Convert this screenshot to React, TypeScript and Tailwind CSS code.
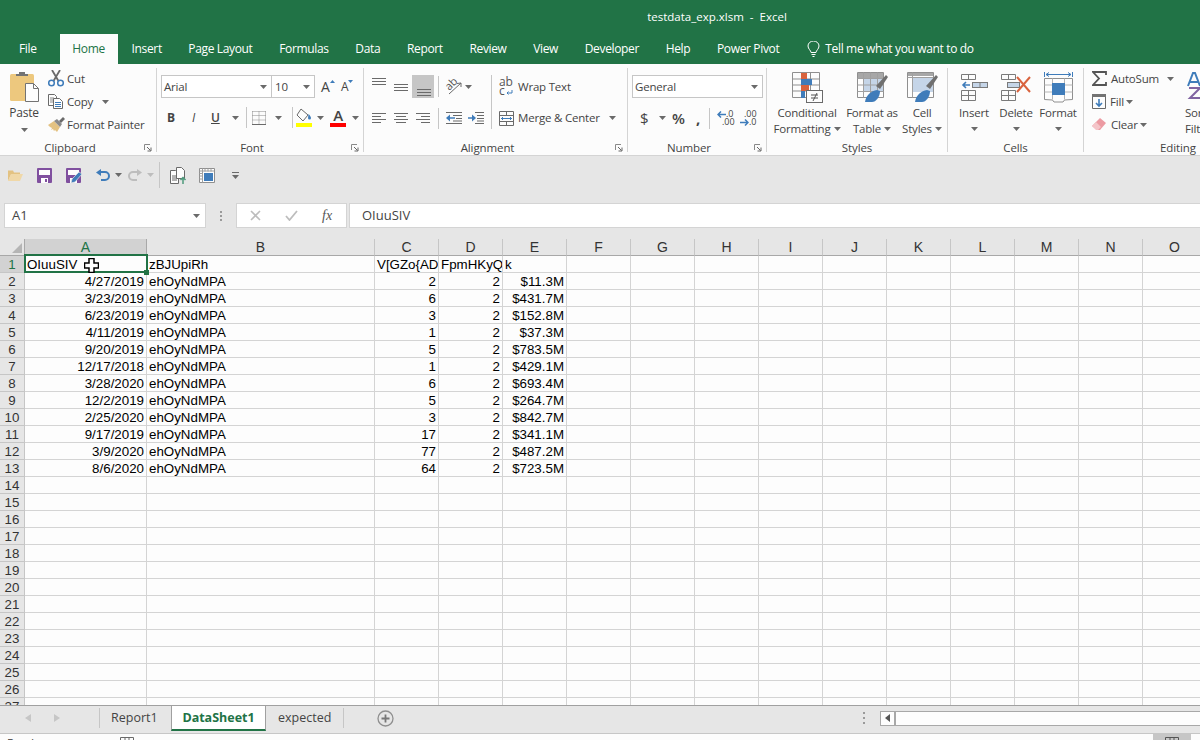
import React from 'react'

const ui = "font-['Open_Sans',sans-serif]"
const cell = "font-['Liberation_Sans',Arial,sans-serif]"

const tabs = [
    { name: 'Insert', left: 14 },
    { name: 'Page Layout', left: 26.5 },
    { name: 'Formulas', left: 26.7 },
    { name: 'Data', left: 26.7 },
    { name: 'Report', left: 26.7 },
    { name: 'Review', left: 26.7 },
    { name: 'View', left: 26.7 },
    { name: 'Developer', left: 26.7 },
    { name: 'Help', left: 26.7 },
    { name: 'Power Pivot', left: 26.7 },
]

const columns = [
    { name: 'A', w: 'w-[122px]' },
    { name: 'B', w: 'w-[228px]' },
    { name: 'C', w: 'w-[64px]' },
    { name: 'D', w: 'w-[64px]' },
    { name: 'E', w: 'w-[64px]' },
    { name: 'F', w: 'w-[64px]' },
    { name: 'G', w: 'w-[64px]' },
    { name: 'H', w: 'w-[64px]' },
    { name: 'I', w: 'w-[64px]' },
    { name: 'J', w: 'w-[64px]' },
    { name: 'K', w: 'w-[64px]' },
    { name: 'L', w: 'w-[64px]' },
    { name: 'M', w: 'w-[64px]' },
    { name: 'N', w: 'w-[64px]' },
    { name: 'O', w: 'w-[64px]' },
]

const data = [
    ['4/27/2019', '2', '$11.3M'],
    ['3/23/2019', '6', '$431.7M'],
    ['6/23/2019', '3', '$152.8M'],
    ['4/11/2019', '1', '$37.3M'],
    ['9/20/2019', '5', '$783.5M'],
    ['12/17/2018', '1', '$429.1M'],
    ['3/28/2020', '6', '$693.4M'],
    ['12/2/2019', '5', '$264.7M'],
    ['2/25/2020', '3', '$842.7M'],
    ['9/17/2019', '17', '$341.1M'],
    ['3/9/2020', '77', '$487.2M'],
    ['8/6/2020', '64', '$723.5M'],
]

function Caret({ className = '', color = '#6a6a6a' }: { className?: string; color?: string }) {
    return (
        <svg width="7" height="4" viewBox="0 0 7 4" className={'shrink-0 ' + className}>
            <path d="M0 0h7L3.5 4z" fill={color} />
        </svg>
    )
}

function Launcher() {
    return (
        <svg width="8" height="8" viewBox="0 0 8 8" className="absolute right-[4px] bottom-[3px]">
            <path d="M.5 6V.5H6" fill="none" stroke="#8a8a8a" />
            <path d="M3 3l3.5 3.5M7 3.5V7H3.5" fill="none" stroke="#666" />
        </svg>
    )
}

function Group({ label, w, children, launcher, last }: { label: string; w: string; children: React.ReactNode; launcher?: boolean; last?: boolean }) {
    return (
        <div className={'flex h-[91px] shrink-0 ' + w}>
            <div className="relative flex h-[91px] min-w-0 flex-1 flex-col">
                <div className="min-h-0 flex-1">{children}</div>
                <div className={'h-[16px] text-center text-[11.5px] leading-[17px] tracking-[-0.1px] text-[#444] ' + (launcher ? 'pr-[16px]' : '')}>{label}</div>
                {launcher && <Launcher />}
            </div>
            {!last && <div className="mt-[4px] h-[84px] w-px shrink-0 bg-[#d4d4d4]" />}
        </div>
    )
}

function Lines({ rows }: { rows: number[][] }) {
    return (
        <>
            {rows.map((r, i) => (
                <path key={i} d={`M${r[0]} ${r[2] + 0.5}H${r[1]}`} stroke="#6a6a6a" />
            ))}
        </>
    )
}

function AlignIcon({ rows }: { rows: number[][] }) {
    return (
        <svg width="15" height="12" viewBox="0 0 15 12">
            <Lines rows={rows} />
        </svg>
    )
}

function Sep({ h = 'h-[21px]', className = '' }: { h?: string; className?: string }) {
    return <div className={'w-px shrink-0 bg-[#c6c6c6] ' + h + ' ' + className} />
}

function BigButton({ icon, lines, w, caretOwnLine }: { icon: React.ReactNode; lines: string[]; w: string; caretOwnLine?: boolean }) {
    return (
        <div className={'flex shrink-0 flex-col items-center pt-[8px] text-[#444] leading-[16px] ' + w}>
            <div className="mb-[2px] flex h-[31px] items-center">{icon}</div>
            <div className="whitespace-nowrap">{lines[0]}</div>
            {caretOwnLine ? (
                <Caret className="mt-[6px]" />
            ) : (
                <div className="flex items-center gap-[3px] whitespace-nowrap">
                    {lines[1]}
                    <Caret />
                </div>
            )}
        </div>
    )
}

function PasteIcon() {
    return (
        <svg width="30" height="31" viewBox="0 0 30 31">
            <rect x="1" y="3" width="24" height="27" rx="1.5" fill="#edc87e" />
            <path d="M7 5V3h3V1h6v2h3v2z" fill="#737373" />
            <path d="M16.5 12.5h8l5 5v13h-13z" fill="#fdfdfd" stroke="#737373" />
            <path d="M24.5 12.5v5h5" fill="none" stroke="#737373" />
        </svg>
    )
}

function CutIcon() {
    return (
        <svg width="16" height="17" viewBox="0 0 16 17">
            <path d="M4 0l6.500 11M12 0L5.500 11" stroke="#6a6a6a" strokeWidth="1.800" fill="none" />
            <circle cx="3.500" cy="13" r="2.800" fill="none" stroke="#3f7cba" strokeWidth="1.500" />
            <circle cx="12.500" cy="13" r="2.800" fill="none" stroke="#3f7cba" strokeWidth="1.500" />
        </svg>
    )
}

function CopyIcon() {
    return (
        <svg width="16" height="15" viewBox="0 0 16 15">
            <path d="M.5.5h6l2 2v9H.5z" fill="#fdfdfd" stroke="#6a6a6a" />
            <path d="M2 4h4M2 6h3M2 8h3" stroke="#8a8a8a" />
            <path d="M5.500 4.500h6l3 3v7h-9z" fill="#fdfdfd" stroke="#6a6a6a" />
            <path d="M7 8.500h6M7 10.500h6M7 12.500h6" stroke="#3f7cba" />
        </svg>
    )
}

function PainterIcon() {
    return (
        <svg width="17" height="15" viewBox="0 0 17 15">
            <path d="M0 8l6-4 6 6-3 5-2-2-1 1-1-2-2 1 1-2-2-1z" fill="#e3c282" />
            <path d="M6 4l3-2 5 5-2 3z" fill="#8a8a8a" />
            <path d="M11 4l4-4 2 2-4 4z" fill="#6a6a6a" />
        </svg>
    )
}

function FillIcon() {
    return (
        <svg width="16" height="19" viewBox="0 0 16 19">
            <path d="M5 1l7 6-5 6-6-6z" fill="#fdfdfd" stroke="#6a6a6a" />
            <path d="M12.500 6c1.500 1.500 2.500 3 2.500 4a1.500 1.500 0 0 1-3 0z" fill="#3f7cba" />
            <rect x="0" y="15" width="16" height="4" fill="#ffff00" />
        </svg>
    )
}

function BordersIcon() {
    return (
        <svg width="14" height="14" viewBox="0 0 14 14">
            <path d="M.5 .5h13M.5 4.500h13M.5 9h13M.5 .5v13M7 .5v13M13.500 .5v13" stroke="#8a8a8a" strokeDasharray="1 1" fill="none" />
            <path d="M0 13.500h14" stroke="#6a6a6a" />
        </svg>
    )
}

function OrientIcon() {
    return (
        <svg width="18" height="17" viewBox="0 0 18 17" className="overflow-visible">
            <text x="1" y="11" fontSize="11" fill="#555" fontFamily="Open Sans, sans-serif" transform="rotate(-45 5 8)">ab</text>
            <path d="M4 16L16 5M16 5l-4 .5M16 5v4" stroke="#6a6a6a" fill="none" />
        </svg>
    )
}

function WrapIcon() {
    return (
        <svg width="15" height="18" viewBox="0 0 15 18" className="overflow-visible">
            <text x="0" y="8" fontSize="12" fill="#555" fontFamily="Open Sans, sans-serif">ab</text>
            <text x="0" y="17" fontSize="12" fill="#555" fontFamily="Open Sans, sans-serif">c</text>
            <path d="M13 12v3H8M9.500 13.500L8 15l1.500 1.500" stroke="#3f7cba" fill="none" />
        </svg>
    )
}

function MergeIcon() {
    return (
        <svg width="15" height="15" viewBox="0 0 15 15">
            <path d="M.5.5h14v14H.5zM.5 4.500h14M.5 10.500h14M7.500.5v4M7.500 10.500v4" stroke="#6a6a6a" fill="none" />
            <path d="M2 7.500h11M4 6L2.500 7.500 4 9M11 6l1.500 1.500L11 9" stroke="#3f7cba" fill="none" />
        </svg>
    )
}

function IndentIcon({ right }: { right?: boolean }) {
    return (
        <svg width="16" height="12" viewBox="0 0 16 12">
            {right ? (
                <>
                    <path d="M0 6h5" stroke="#3f7cba" strokeWidth="1.500" />
                    <path d="M4 2.500L8 6l-4 3.500z" fill="#3f7cba" />
                    <path d="M7 .5h9M9 3.500h7M9 6.500h7M9 9h7M7 11.500h9" stroke="#6a6a6a" />
                </>
            ) : (
                <>
                    <path d="M3 6h6" stroke="#3f7cba" strokeWidth="1.500" />
                    <path d="M4 2.500L0 6l4 3.500z" fill="#3f7cba" />
                    <path d="M0 .5h16M7 3.500h9M10 6.500h6M7 9h9M0 11.500h16" stroke="#6a6a6a" />
                </>
            )}
        </svg>
    )
}

function CondIcon() {
    return (
        <svg width="31" height="31" viewBox="0 0 31 31">
            <path d="M.5.5h27v25H.5zM.5 7h27M.5 13h27M.5 19h27M9.500.5v25M18.500.5v25" stroke="#8f8f8f" fill="none" />
            <path d="M9 1h6v6H9z" fill="#d9633e" />
            <path d="M9 7h11v6H9z" fill="#3f7cba" />
            <path d="M9 13h8v6H9z" fill="#d9633e" />
            <path d="M9 19h4v7H9z" fill="#3f7cba" />
            <rect x="14.500" y="18.500" width="16" height="12" fill="#fdfdfd" stroke="#6a6a6a" />
            <path d="M19 23h7M19 26h7M25 21l-4 8" stroke="#555" />
        </svg>
    )
}

function TableStyleIcon() {
    return (
        <svg width="31" height="31" viewBox="0 0 31 31">
            <path d="M.5.5h26v25H.5z" fill="#fdfdfd" stroke="#8f8f8f" />
            <rect x="1" y="1" width="25" height="5" fill="#a7a7a7" />
            <rect x="6" y="6" width="20" height="14" fill="#c5d5e8" />
            <path d="M.5 6.500h26M.5 13h26M.5 19.500h26M6.500.5v25M13.500.5v25M20.500.5v25" stroke="#a0a0a0" fill="none" />
            <path d="M19 14L29 3l2 2-8 12z" fill="#6f6f6f" />
            <path d="M8 30c1-7 6-11 12-12l3 1c0 6-4 11-8 11z" fill="#3f7cba" />
        </svg>
    )
}

function CellStyleIcon() {
    return (
        <svg width="31" height="31" viewBox="0 0 31 31">
            <path d="M.5.5h26v25H.5z" fill="#fdfdfd" stroke="#8f8f8f" />
            <rect x="1" y="1" width="25" height="3" fill="#a7a7a7" />
            <path d="M.5 5.500h26M5.500.5v25" stroke="#a0a0a0" fill="none" />
            <rect x="6" y="6" width="20" height="14" fill="#c5d5e8" />
            <path d="M19 14L29 3l2 2-8 12z" fill="#6f6f6f" />
            <path d="M8 30c1-7 6-11 12-12l3 1c0 6-4 11-8 11z" fill="#3f7cba" />
        </svg>
    )
}

function InsertIcon() {
    return (
        <svg width="27" height="28" viewBox="0 0 27 28">
            <path d="M.5.5h14v5H.5zM7.500.5v5M.5 16.500h14v10H.5zM.5 21.500h14M7.500 16.500v10" stroke="#7a7a7a" fill="none" />
            <rect x="11.500" y="8.500" width="15" height="5" fill="#c5d5e8" stroke="#7a7a7a" />
            <path d="M19 8.500v5" stroke="#7a7a7a" />
            <path d="M2 11h7M5 8l-3 3 3 3" stroke="#3f7cba" strokeWidth="1.600" fill="none" />
        </svg>
    )
}

function DeleteIcon() {
    return (
        <svg width="31" height="28" viewBox="0 0 31 28">
            <path d="M.5.5h14v5H.5zM7.500.5v5M.5 16.500h14v10H.5zM.5 21.500h14M7.500 16.500v10" stroke="#7a7a7a" fill="none" />
            <rect x="6.500" y="8.500" width="12" height="5" fill="#c5d5e8" stroke="#7a7a7a" />
            <path d="M16 3l13 15M29 3L16 18" stroke="#d9633e" strokeWidth="2" fill="none" />
        </svg>
    )
}

function FormatIcon() {
    return (
        <svg width="29" height="31" viewBox="0 0 29 31">
            <path d="M.5 0v5M28.500 0v5" stroke="#3f7cba" />
            <path d="M2 2.500h25M5 .5L2 2.500l3 2M24 .5l3 2-3 2" stroke="#3f7cba" fill="none" />
            <path d="M.5 6.500h28v21l-8 .5-1.500 2H10l-1.500-2-8-.5z" fill="#fdfdfd" stroke="#8f8f8f" />
            <path d="M.5 13h28M.5 20h28M8.500 6.500v21M20.500 6.500v21" stroke="#b5b5b5" fill="none" />
            <rect x="8" y="11" width="13" height="12" fill="#3f7cba" />
        </svg>
    )
}

function SumIcon() {
    return (
        <svg width="15" height="15" viewBox="0 0 15 15">
            <path d="M14 4V1H1l6 6.500L1 14h13v-3" stroke="#555" strokeWidth="1.800" fill="none" />
        </svg>
    )
}

function FillDownIcon() {
    return (
        <svg width="14" height="15" viewBox="0 0 14 15">
            <path d="M.5.5h13v14H.5z" fill="#fdfdfd" stroke="#6a6a6a" />
            <rect x="0" y="0" width="14" height="3" fill="#737373" />
            <path d="M7 5v7M4 9l3 3 3-3" stroke="#3f7cba" strokeWidth="1.600" fill="none" />
        </svg>
    )
}

function EraserIcon() {
    return (
        <svg width="14" height="13" viewBox="0 0 14 13">
            <path d="M8 0l6 5-6 7H5L0 8z" fill="#ec9aa2" />
            <path d="M0 8l4-4 5 5-3 3H4z" fill="#f4c4c8" />
        </svg>
    )
}

function SortIcon() {
    return (
        <svg width="15" height="28" viewBox="0 0 15 28">
            <path d="M1 14L6 1h2l5 13M3 10h8" stroke="#3f7cba" strokeWidth="2" fill="none" />
            <path d="M2 16h11L3 26h10" stroke="#8064a2" strokeWidth="2" fill="none" />
        </svg>
    )
}

function DecimalArrow({ right }: { right?: boolean }) {
    return (
        <svg width="9" height="7" viewBox="0 0 9 7" className="shrink-0">
            <path d={right ? 'M0 3.500h8M5 .5l3 3-3 3' : 'M9 3.500H1M4 .5l-3 3 3 3'} stroke="#3f7cba" strokeWidth="1.500" fill="none" />
        </svg>
    )
}

function Ribbon() {
    return (
        <div className={'flex h-[92px] shrink-0 items-start overflow-hidden border-b border-[#d4d4d4] bg-[#fcfcfc] text-[11.5px] tracking-[-0.2px] ' + ui}>
            <Group label="Clipboard" w="w-[157px]" launcher>
                <div className="flex">
                    <div className="ml-[4px] w-[40px]">
                        <div className="flex flex-col items-center pt-[7px] text-[12px] leading-[16px] text-[#444]">
                            <div className="mb-[3px]"><PasteIcon /></div>
                            <div>Paste</div>
                            <Caret className="mt-[7px]" />
                        </div>
                    </div>
                    <div className="ml-[4px] flex flex-col pt-[3px] leading-[16px] text-[#444]">
                        <div className="flex h-[23px] items-center"><span className="w-[19px]"><CutIcon /></span>Cut</div>
                        <div className="flex h-[23px] items-center"><span className="w-[19px]"><CopyIcon /></span>Copy<Caret className="ml-[9px]" /></div>
                        <div className="flex h-[23px] items-center whitespace-nowrap"><span className="w-[19px]"><PainterIcon /></span>Format Painter</div>
                    </div>
                </div>
            </Group>
            <Group label="Font" w="w-[207px]" launcher>
                <div className="flex flex-col pl-[4px] pt-[11px] text-[#444]">
                    <div className="flex items-center">
                        <div className="flex h-[23px] w-[111px] items-center justify-between border border-[#c6c6c6] bg-white pl-[2px] pr-[4px]">Arial<Caret /></div>
                        <div className="flex h-[23px] w-[43px] items-center justify-between border border-l-0 border-[#c6c6c6] bg-white pl-[3px] pr-[4px]">10<Caret /></div>
                        <div className="ml-[6px] flex w-[20px] items-start text-[14px] leading-[16px]">A<svg width="5" height="3" viewBox="0 0 5 3" className="mt-[1px]"><path d="M0 3L2.500 0 5 3z" fill="#3f7cba" /></svg></div>
                        <div className="flex items-start text-[12px] leading-[16px]">A<svg width="5" height="3" viewBox="0 0 5 3" className="mt-[1px]"><path d="M0 0l2.500 3L5 0z" fill="#3f7cba" /></svg></div>
                    </div>
                    <div className="mt-[9px] flex items-center">
                        <span className="ml-[6px] w-[25px] text-[12px] font-bold leading-[20px]">B</span>
                        <span className="w-[19px] text-[12px] italic leading-[20px]">I</span>
                        <span className="w-[21px] text-[12px] font-semibold underline leading-[20px]">U</span>
                        <Caret />
                        <Sep className="ml-[7px]" />
                        <span className="ml-[5px]"><BordersIcon /></span>
                        <Caret className="ml-[9px]" />
                        <Sep className="ml-[10px]" />
                        <span className="ml-[3px]"><FillIcon /></span>
                        <Caret className="ml-[5px]" />
                        <div className="ml-[6px] flex w-[16px] flex-col items-center text-[15px] font-semibold leading-[15px]">A<div className="h-[4px] w-[16px] bg-[#ff0000]" /></div>
                        <Caret className="ml-[6px]" />
                    </div>
                </div>
            </Group>
            <Group label="Alignment" w="w-[264px]" launcher>
                <div className="flex pl-[8px] pt-[11px] text-[#444]">
                    <div className="flex flex-col">
                        <div className="flex h-[23px] items-center">
                            <span className="w-[22px] pb-[6px]"><AlignIcon rows={[[0, 14, 0], [0, 14, 3], [0, 14, 6]]} /></span>
                            <span className="w-[18px]"><AlignIcon rows={[[0, 14, 3], [0, 14, 6], [0, 14, 9]]} /></span>
                            <span className="flex h-[23px] w-[22px] items-end justify-center bg-[#c6c6c6] pb-[1px]"><AlignIcon rows={[[1, 15, 4], [1, 15, 7], [1, 15, 10]]} /></span>
                        </div>
                        <div className="mt-[10px] flex h-[20px] items-center">
                            <span className="w-[22px]"><AlignIcon rows={[[0, 14, 1], [0, 9, 4], [0, 14, 7], [0, 9, 10]]} /></span>
                            <span className="w-[22px]"><AlignIcon rows={[[0, 14, 1], [2, 12, 4], [0, 14, 7], [2, 12, 10]]} /></span>
                            <span className="w-[18px]"><AlignIcon rows={[[0, 14, 1], [5, 14, 4], [0, 14, 7], [5, 14, 10]]} /></span>
                        </div>
                    </div>
                    <div className="ml-[4px] flex flex-col">
                        <div className="flex h-[23px] items-center">
                            <Sep />
                            <span className="ml-[6px]"><OrientIcon /></span>
                            <Caret className="ml-[2px]" />
                        </div>
                        <div className="mt-[10px] flex h-[20px] items-center">
                            <Sep />
                            <span className="ml-[7px]"><IndentIcon /></span>
                            <span className="ml-[6px]"><IndentIcon right /></span>
                        </div>
                    </div>
                    <Sep h="h-[54px]" className="ml-[7px]" />
                    <div className="ml-[7px] flex flex-col">
                        <div className="flex h-[23px] items-center gap-[4px]"><WrapIcon />Wrap Text</div>
                        <div className="mt-[10px] flex h-[20px] items-center"><MergeIcon /><span className="ml-[4px] whitespace-nowrap">Merge &amp; Center</span><Caret className="ml-[9px]" /></div>
                    </div>
                </div>
            </Group>
            <Group label="Number" w="w-[139px]" launcher>
                <div className="flex flex-col pl-[4px] pt-[11px] text-[#444]">
                    <div className="flex h-[23px] w-[131px] items-center justify-between border border-[#c6c6c6] bg-white pl-[2px] pr-[4px]">General<Caret /></div>
                    <div className="mt-[10px] flex h-[20px] items-center">
                        <span className="ml-[8px] w-[19px] text-[15px]">$</span>
                        <Caret />
                        <span className="ml-[6px] w-[24px] text-[15px] font-semibold">%</span>
                        <span className="w-[13px] text-[15px] font-bold leading-[15px]">,</span>
                        <Sep className="mr-[7px]" />
                        <div className="flex w-[23px] flex-col items-start text-[9px] leading-[8px] tracking-normal">
                            <span className="flex items-center">
                                <DecimalArrow />.0
                            </span>
                            <span className="pl-[5px]">.00</span>
                        </div>
                        <div className="flex w-[18px] flex-col items-start text-[9px] leading-[8px] tracking-normal">
                            <span className="pl-[4px]">.00</span>
                            <span className="flex items-center">
                                <DecimalArrow right />.0
                            </span>
                        </div>
                    </div>
                </div>
            </Group>
            <Group label="Styles" w="w-[181px]">
                <div className="flex">
                    <BigButton w="w-[80px]" icon={<CondIcon />} lines={['Conditional', 'Formatting']} />
                    <BigButton w="w-[50px]" icon={<TableStyleIcon />} lines={['Format as', 'Table']} />
                    <BigButton w="w-[50px]" icon={<CellStyleIcon />} lines={['Cell', 'Styles']} />
                </div>
            </Group>
            <Group label="Cells" w="w-[136px]">
                <div className="flex pl-[5px]">
                    <BigButton w="w-[42px]" icon={<InsertIcon />} lines={['Insert']} caretOwnLine />
                    <BigButton w="w-[42px]" icon={<DeleteIcon />} lines={['Delete']} caretOwnLine />
                    <BigButton w="w-[42px]" icon={<FormatIcon />} lines={['Format']} caretOwnLine />
                </div>
            </Group>
            <Group label="Editing" w="w-[188px]" last>
                <div className="flex leading-[16px] text-[#444]">
                    <div className="flex w-[101px] flex-col pl-[8px] pt-[3px]">
                        <div className="flex h-[23px] items-center"><SumIcon /><span className="ml-[4px]">AutoSum</span><Caret className="ml-[8px]" /></div>
                        <div className="flex h-[23px] items-center"><FillDownIcon /><span className="ml-[4px]">Fill</span><Caret className="ml-[2px]" /></div>
                        <div className="flex h-[23px] items-center"><EraserIcon /><span className="ml-[5px]">Clear</span><Caret className="ml-[2px]" /></div>
                    </div>
                    <div className="flex flex-col pt-[8px]">
                        <div className="mb-[2px] h-[31px] pl-[2px]"><SortIcon /></div>
                        <div>Sort &amp;</div>
                        <div>Filter</div>
                    </div>
                </div>
            </Group>
        </div>
    )
}

function SaveIcon() {
    return (
        <svg width="15" height="15" viewBox="0 0 15 15">
            <rect width="15" height="15" rx="1" fill="#80509f" />
            <rect x="2" y="2" width="11" height="5" fill="#fdfdfd" />
            <rect x="4" y="10" width="7" height="5" fill="#fdfdfd" />
            <rect x="8" y="11" width="2" height="3" fill="#80509f" />
        </svg>
    )
}

function QuickAccess() {
    return (
        <div className="h-[47px] shrink-0 pt-[6px]">
            <div className="flex h-[26px] items-center pl-[7px]">
                <svg width="16" height="13" viewBox="0 0 16 13">
                    <path d="M1 12V1.500h5l1 2h6v2H4L1 12z" fill="#e3c282" />
                    <path d="M1 12l3-7h12l-3 7z" fill="#f0d8a8" />
                </svg>
                <span className="ml-[14px]"><SaveIcon /></span>
                <svg width="17" height="15" viewBox="0 0 17 15" className="ml-[14px]">
                    <rect width="15" height="15" rx="1" fill="#80509f" />
                    <rect x="2" y="2" width="11" height="5" fill="#fdfdfd" />
                    <rect x="4" y="10" width="7" height="5" fill="#fdfdfd" />
                    <path d="M5 15l1-4 7-7 3 2-7 8z" fill="#3f7cba" stroke="#e6e6e6" strokeWidth=".7" />
                </svg>
                <svg width="14" height="13" viewBox="0 0 14 13" className="ml-[13px]">
                    <path d="M3 3h6a4 4 0 0 1 0 8H5" stroke="#3f7cba" strokeWidth="2" fill="none" />
                    <path d="M5 0v7L0 3.500z" fill="#3f7cba" />
                </svg>
                <Caret className="ml-[5px]" />
                <svg width="14" height="13" viewBox="0 0 14 13" className="ml-[6px]">
                    <path d="M11 3H5a4 4 0 0 0 0 8h4" stroke="#bdbdbd" strokeWidth="2" fill="none" />
                    <path d="M9 0v7l5-3.500z" fill="#bdbdbd" />
                </svg>
                <Caret className="ml-[5px]" color="#bdbdbd" />
                <Sep h="h-[26px]" className="ml-[5px]" />
                <svg width="17" height="17" viewBox="0 0 17 17" className="ml-[10px]">
                    <path d="M.5 3.500h5l3 3v10h-8z" fill="#fdfdfd" stroke="#6a6a6a" />
                    <path d="M6.500.5h5l3 3v8h-8z" fill="#fdfdfd" stroke="#6a6a6a" />
                    <path d="M2 9h5M2 11h5M2 13h5" stroke="#6a6a6a" />
                    <path d="M13 17v-6M10.500 13l2.500-2.500 2.500 2.500" stroke="#4f9a7c" strokeWidth="1.500" fill="none" />
                </svg>
                <svg width="16" height="15" viewBox="0 0 16 15" className="ml-[12px]">
                    <path d="M.5.5h15v14H.5z" fill="#fdfdfd" stroke="#8f8f8f" />
                    <path d="M.5 3h15M3.500.5v14M.5 5.500h3M.5 8h3M.5 11h3M6 .5v3M9 .5v3M12 .5v3" stroke="#a0a0a0" fill="none" />
                    <rect x="5" y="5" width="9" height="8" fill="#3f7cba" />
                </svg>
                <svg width="7" height="7" viewBox="0 0 7 7" className="ml-[17px]">
                    <path d="M0 .5h7" stroke="#6a6a6a" />
                    <path d="M0 3h7L3.500 7z" fill="#6a6a6a" />
                </svg>
            </div>
        </div>
    )
}

function FormulaBar() {
    return (
        <div className={'flex h-[25px] shrink-0 items-stretch pl-[4px] ' + ui}>
            <div className="flex w-[202px] items-center justify-between border border-[#d4d4d4] bg-white pl-[7px] pr-[5px] pt-px text-[13px] text-[#444]">
                A1
                <Caret />
            </div>
            <div className="flex w-[30px] flex-col items-center justify-center gap-[2px]">
                <span className="h-[2px] w-[2px] bg-[#9a9a9a]" />
                <span className="h-[2px] w-[2px] bg-[#9a9a9a]" />
                <span className="h-[2px] w-[2px] bg-[#9a9a9a]" />
            </div>
            <div className="flex w-[111px] items-center border border-[#d4d4d4] bg-white pl-[13px]">
                <svg width="11" height="11" viewBox="0 0 11 11">
                    <path d="M1 1l9 9M10 1l-9 9" stroke="#bdbdbd" strokeWidth="1.600" />
                </svg>
                <svg width="13" height="11" viewBox="0 0 13 11" className="ml-[24px]">
                    <path d="M1 6l3.500 4L12 1" stroke="#bdbdbd" strokeWidth="1.800" fill="none" />
                </svg>
                <span className="ml-[24px] font-['Liberation_Serif',serif] text-[14px] italic leading-none text-[#555]">fx</span>
            </div>
            <div className="ml-[2px] flex flex-1 items-center border border-r-0 border-[#d4d4d4] bg-white pl-[12px] pt-px text-[13px] text-[#444]">OIuuSIV</div>
        </div>
    )
}

function HeaderRow() {
    return (
        <div className={'flex h-[17px] shrink-0 ' + cell}>
            <div className="flex w-[25px] shrink-0 items-end justify-end border-r border-b border-[#a8a8a8] bg-[#e6e6e6] p-[2px]">
                <svg width="10" height="10" viewBox="0 0 10 10"><path d="M10 0v10H0z" fill="#b5b5b5" /></svg>
            </div>
            {columns.map((c) => {
                const active = c.name === 'A'
                return (
                    <div
                        key={c.name}
                        className={
                            'flex shrink-0 items-center justify-center border-r border-b text-[14px] leading-none ' +
                            c.w +
                            (active
                                ? ' border-r-[#a8a8a8] border-b-[#a8a8a8] bg-[#d2d2d2] text-[#217346]'
                                : ' border-r-[#c6c6c6] border-b-[#a8a8a8] bg-[#e6e6e6] text-[#333]')
                        }
                    >
                        {c.name}
                    </div>
                )
            })}
        </div>
    )
}

function Cell({ w, children, right, clip }: { w: string; children?: React.ReactNode; right?: boolean; clip?: boolean }) {
    return (
        <div
            className={
                'h-[17px] shrink-0 whitespace-nowrap border-r border-b border-[#d4d4d4] pr-[2px] pl-[2px] pt-px text-[13.33px] leading-[16px] text-black ' +
                w +
                (right ? ' text-right' : '') +
                (clip ? ' overflow-hidden' : '')
            }
        >
            {children}
        </div>
    )
}

function Row({ n, values }: { n: number; values: { a?: string; b?: string; c?: string; d?: string; e?: string } }) {
    const head = values.a === 'OIuuSIV'
    return (
        <div className={'flex h-[17px] shrink-0 ' + cell}>
            <div
                className={
                    'flex h-[17px] w-[25px] shrink-0 items-center justify-center border-r border-b border-[#c6c6c6] pt-px text-[13.33px] leading-none ' +
                    (head ? 'bg-[#d2d2d2] text-[#217346]' : 'bg-[#e6e6e6] text-[#333]')
                }
            >
                {n}
            </div>
            <Cell w="w-[122px]" right={!head}>{values.a}</Cell>
            <Cell w="w-[228px]">{values.b}</Cell>
            <Cell w="w-[64px]" right={!head} clip>{values.c}</Cell>
            <Cell w="w-[64px]" right={!head} clip>{values.d}</Cell>
            <Cell w="w-[64px]" right={!head}>{values.e}</Cell>
            {columns.slice(5).map((c) => (
                <Cell key={c.name} w={c.w} />
            ))}
        </div>
    )
}

function Sheet() {
    const blank = Array.from({ length: 14 }, (_, i) => i + 14)
    return (
        <div className="relative mt-[11px] flex min-h-0 flex-1 flex-col overflow-hidden bg-[#fdfdfd]">
            <HeaderRow />
            <Row n={1} values={{ a: 'OIuuSIV', b: 'zBJUpiRh', c: 'V[GZo{ADv', d: 'FpmHKyQ', e: 'k' }} />
            {data.map((d, i) => (
                <Row key={i} n={i + 2} values={{ a: d[0], b: 'ehOyNdMPA', c: d[1], d: '2', e: d[2] }} />
            ))}
            {blank.map((n) => (
                <Row key={n} n={n} values={{}} />
            ))}
            {/* selected cell and cursor sit over the grid */}
            <div className="absolute top-[15px] left-[24px] h-[19px] w-[124px] border-2 border-[#217346]" />
            <div className="absolute top-[31px] left-[144px] h-[5px] w-[5px] bg-[#217346]" />
            <svg width="15" height="15" viewBox="0 0 15 15" className="absolute top-[19px] left-[84px]">
                <path d="M5 .5h5V5h4.500v5H10v4.500H5V10H.5V5H5z" fill="#fff" stroke="#000" strokeWidth="1.500" />
            </svg>
        </div>
    )
}

function SheetTabs() {
    return (
        <div className={'flex h-[28px] shrink-0 items-start border-t border-[#a0a0a0] ' + ui}>
            <div className="flex h-[24px] items-center">
                <svg width="6" height="8" viewBox="0 0 6 8" className="ml-[25px]"><path d="M6 0v8L0 4z" fill="#c6c6c6" /></svg>
                <svg width="6" height="8" viewBox="0 0 6 8" className="ml-[23px]"><path d="M0 0v8l6-4z" fill="#c6c6c6" /></svg>
                <Sep h="h-[20px]" className="ml-[39px] bg-[#8f8f8f]" />
                <div className="ml-[11px] w-[60px] pt-px text-[12.5px] text-[#444]">Report1</div>
            </div>
            <div className="flex h-[25px] w-[95px] items-center justify-center border-x border-b-[2px] border-x-[#a0a0a0] border-b-[#217346] bg-white pt-px text-[12.5px] font-bold text-[#217346]">DataSheet1</div>
            <div className="flex h-[24px] items-center">
                <div className="ml-[12px] w-[65px] pt-px text-[12.5px] text-[#444]">expected</div>
                <Sep h="h-[20px]" className="bg-[#8f8f8f]" />
                <svg width="17" height="17" viewBox="0 0 17 17" className="ml-[33px]">
                    <circle cx="8.500" cy="8.500" r="7.500" fill="none" stroke="#8f8f8f" strokeWidth="1.300" />
                    <path d="M4.500 8.500h8M8.500 4.500v8" stroke="#777" strokeWidth="1.800" />
                </svg>
            </div>
            <div className="ml-auto flex h-[24px] items-center">
                <div className="mr-[15px] flex flex-col gap-[3px]">
                    <span className="h-[2px] w-[2px] bg-[#9a9a9a]" />
                    <span className="h-[2px] w-[2px] bg-[#9a9a9a]" />
                    <span className="h-[2px] w-[2px] bg-[#9a9a9a]" />
                </div>
                <div className="flex h-[15px] w-[320px] border border-r-0 border-[#a8a8a8] bg-[#fdfdfd]">
                    <div className="flex w-[15px] items-center justify-center border-r-2 border-[#a8a8a8]">
                        <svg width="5" height="8" viewBox="0 0 5 8"><path d="M5 0v8L0 4z" fill="#555" /></svg>
                    </div>
                </div>
            </div>
        </div>
    )
}

function StatusBar() {
    return (
        <div className={'flex h-[7px] shrink-0 overflow-hidden border-t border-[#c6c6c6] bg-[#fcfcfc] ' + ui}>
            <div className="mt-[1px] w-[120px] shrink-0 pl-[7px] text-[11.5px] leading-[16px] text-[#444]">Ready</div>
            <svg width="14" height="3" viewBox="0 0 14 3" className="mt-[3px]">
                <path d="M.5 3V.5h13V3M5 .5V3M9 .5V3" stroke="#6a6a6a" fill="none" />
            </svg>
            <div className="ml-auto mr-[9px] flex h-[7px] w-[38px] justify-center bg-[#c6c6c6] pt-[3px]">
                <svg width="14" height="3" viewBox="0 0 14 3">
                    <path d="M.5 3V.5h13V3M5 .5V3M9 .5V3" stroke="#555" fill="none" />
                </svg>
            </div>
        </div>
    )
}

export default function App() {
    return (
        <div className="flex h-[740px] w-[1200px] flex-col overflow-hidden bg-[#e6e6e6]">
            <div className={'flex h-[34px] shrink-0 items-center justify-center bg-[#217346] pl-[234px] text-[11.5px] text-white ' + ui}>
                testdata_exp.xlsm&nbsp; -&nbsp; Excel
            </div>
            <div className={'flex h-[30px] shrink-0 items-end bg-[#217346] text-[12px] tracking-[-0.35px] ' + ui}>
                <div className="ml-[19px] flex h-[30px] items-center text-white">File</div>
                <div className="ml-[23px] flex h-[30px] w-[58px] items-center justify-center bg-[#fcfcfc] text-[#217346]">Home</div>
                {tabs.map((t) => (
                    <div key={t.name} className="flex h-[30px] items-center text-white" style={{ marginLeft: t.left }}>
                        {t.name}
                    </div>
                ))}
                <div className="ml-[28px] flex h-[30px] items-center gap-[5px] text-white">
                    <svg width="13" height="16" viewBox="0 0 13 16">
                        <path d="M4 11.500c0-2-3-3.500-3-6.500a5.500 5 0 0 1 11 0c0 3-3 4.500-3 6.500zM4.500 13.500h4M5.500 15.500h2" fill="none" stroke="#fff" />
                    </svg>
                    Tell me what you want to do
                </div>
            </div>
            <Ribbon />
            <QuickAccess />
            <FormulaBar />
            <Sheet />
            <SheetTabs />
            <StatusBar />
        </div>
    )
}
